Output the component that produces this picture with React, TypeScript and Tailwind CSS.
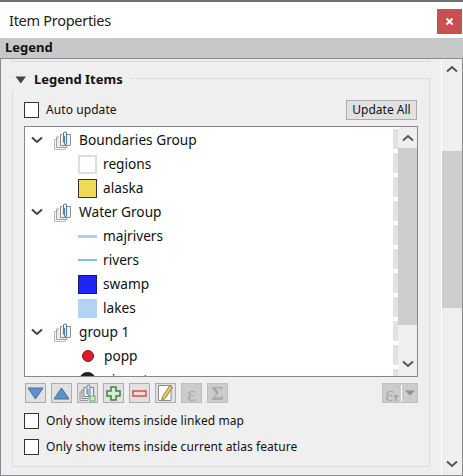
const font = "font-['Noto_Sans',sans-serif]";

function Checkbox({ label }: { label: string }) {
  return (
    <label className="flex h-4 items-center gap-[7px] text-[12px] tracking-[0.08px] text-[#111]">
      <span className="h-4 w-[15px] border border-[#333] bg-white" />
      {label}
    </label>
  );
}

function GroupIcon() {
  return (
    <svg width="18" height="19" viewBox="0 0 18 19" fill="none">
      <path d="M3 8.5H0.5V18.5H11.5V16" stroke="#b8b8b8" />
      <path d="M5 6H2.5V16.5H13V14.5" stroke="#a0a0a0" fill="#ececec" />
      <path d="M8 3.5H6.5V14.5H16.5V3.5H13" stroke="#8a8a8a" fill="#f4f4f4" />
      <path d="M9.5 11.5V2.5a1.5 1.5 0 0 1 3 0v10a1 1 0 0 1-2 0V5" stroke="#4f7ea8" strokeWidth="1.1" />
    </svg>
  );
}

function Chevron({ color = '#555' }: { color?: string }) {
  return (
    <svg width="12" height="8" viewBox="0 0 12 8" fill="none">
      <path d="M1 1.5L6 6L11 1.5" stroke={color} strokeWidth="2" />
    </svg>
  );
}

function ChevronUp() {
  return (
    <svg width="12" height="8" viewBox="0 0 12 8" fill="none">
      <path d="M1 6.5L6 2L11 6.5" stroke="#555" strokeWidth="2" />
    </svg>
  );
}

function GroupRow({ name }: { name: string }) {
  return (
    <div className="flex h-6 items-center text-[13.7px] text-[#111]">
      <span className="ml-[6px] flex w-[23px] justify-start">
        <Chevron color="#444" />
      </span>
      <span className="flex w-[25px]">
        <GroupIcon />
      </span>
      <span>{name}</span>
    </div>
  );
}

function LayerRow({ name, symbol, wide }: { name: string; symbol: React.ReactNode; wide?: boolean }) {
  return (
    <div className="flex h-6 items-center pl-[53px] text-[13.7px] text-[#111]">
      <span className="flex h-[19px] w-[19px] shrink-0 items-center justify-center">{symbol}</span>
      <span className={wide ? 'ml-[7px]' : 'ml-[6px]'}>{name}</span>
    </div>
  );
}

function Fill({ className }: { className: string }) {
  return <span className={`block h-[19px] w-[19px] border ${className}`} />;
}

function Line({ className }: { className: string }) {
  return <span className={`block w-[19px] ${className}`} />;
}

function Dot({ className }: { className: string }) {
  return <span className={`block shrink-0 rounded-full border ${className}`} />;
}

function ToolButton({ children, disabled }: { children: React.ReactNode; disabled?: boolean }) {
  return (
    <button
      className={`flex h-5 w-[21px] items-center justify-center border ${
        disabled ? 'border-[#bfbfbf] bg-[#cccccc]' : 'border-[#adadad] bg-[#e1e1e1]'
      }`}
    >
      {children}
    </button>
  );
}

function Scrollbar({ topClass, thumbClass, bottomClass }: { topClass: string; thumbClass: string; bottomClass: string }) {
  return (
    <div className="flex h-full flex-col bg-[#efefef]">
      <div className={`flex justify-center ${topClass}`}>
        <ChevronUp />
      </div>
      <div className={`bg-[#cdcdcd] ${thumbClass}`} />
      <div className={`flex flex-1 justify-center ${bottomClass}`}>
        <Chevron />
      </div>
    </div>
  );
}

export default function App() {
  return (
    <div className={`flex h-[476px] w-[463px] flex-col overflow-hidden bg-white ${font}`}>
      {/* title bar */}
      <div className="flex h-[38px] shrink-0 items-start justify-between border-t-2 border-[#707070] bg-white">
        <span className="mt-[7px] ml-[9px] text-[14.5px] leading-[22px] tracking-[-0.28px] text-[#222]">Item Properties</span>
        <button className="mt-[7px] mr-px flex h-[25px] w-[25px] items-center justify-center bg-[#c75050]">
          <svg width="9" height="9" viewBox="0 0 9 9">
            <path d="M1.5 1.5L7.5 7.5M7.5 1.5L1.5 7.5" stroke="#fff" strokeWidth="2" />
          </svg>
        </button>
      </div>

      {/* section header */}
      <div className="flex h-5 shrink-0 items-center bg-[#c8c8c8] pl-[5px] text-[13px] font-bold text-[#111]">
        Legend
      </div>

      {/* scrolling panel */}
      <div className="flex min-h-0 flex-1 border border-[#8a8a94] bg-[#efefef]">
        <div className="min-w-0 flex-1 border-r border-white px-[11px]">
          <div className="h-[3px] border-x border-b border-[#dcdcdc]" />

          {/* Legend Items group */}
          <div className="relative mt-[16px] h-[389px] border border-[#dcdcdc] px-[11px]">
            <div className="absolute -top-[9px] -left-px flex h-5 items-center gap-[7px] bg-[#efefef] pr-[7px] pl-[3px] text-[13px] font-bold text-[#111]">
              <svg width="12" height="8" viewBox="0 0 12 8">
                <path d="M0.5 0.5H11L5.75 7.5Z" fill="#444" />
              </svg>
              Legend Items
            </div>

            <div className="mt-[21px] flex h-5 items-center justify-between pr-px">
              <Checkbox label="Auto update" />
              <button className="h-5 w-[71px] border border-[#adadad] bg-[#e1e1e1] text-[12px] leading-none text-[#111]">
                Update All
              </button>
            </div>

            {/* tree */}
            <div className="mt-[6px] flex h-[251px] border border-[#828790] bg-white">
              <div className="relative min-w-0 flex-1 overflow-hidden pt-px">
                <GroupRow name="Boundaries Group" />
                <LayerRow name="regions" symbol={<Fill className="border-2 border-[#dddddd] bg-white" />} />
                <LayerRow name="alaska" symbol={<Fill className="border-[#333] bg-[#efd955]" />} />
                <GroupRow name="Water Group" />
                <LayerRow name="majrivers" symbol={<Line className="h-[3px] bg-[#a9d0f1]" />} />
                <LayerRow name="rivers" symbol={<Line className="h-[2px] bg-[#85bbe8]" />} />
                <LayerRow name="swamp" symbol={<Fill className="border-[#1a1a60] bg-[#1c26f5]" />} />
                <LayerRow name="lakes" symbol={<Fill className="border-[#b0d4f2] bg-[#b0d4f2]" />} />
                <GroupRow name="group 1" />
                <LayerRow name="popp" wide symbol={<Dot className="h-3 w-3 border-[#7d1a22] bg-[#e3192b]" />} />
                <LayerRow name="airports" wide symbol={<Dot className="h-[17px] w-[17px] border-[#111] bg-[#222]" />} />
                {/* dashed guide on the right of the tree */}
                <div className="absolute top-0 right-0 flex w-[5px] flex-col gap-1 pt-[2px]">
                  {Array.from({ length: 11 }).map((_, i) => (
                    <span key={i} className="block h-5 shrink-0 bg-[#e2e2e2]" />
                  ))}
                </div>
              </div>
              <div className="w-[19px] shrink-0">
                <Scrollbar topClass="h-[21px] items-center" thumbClass="h-[177px]" bottomClass="pt-[35px]" />
              </div>
            </div>

            {/* toolbar */}
            <div className="mt-[6px] flex h-5 items-center justify-between pl-px">
              <div className="flex gap-[5px]">
                <ToolButton>
                  <svg width="17" height="13" viewBox="0 0 17 13">
                    <path d="M1 1H16L8.5 12Z" fill="#5b92cc" stroke="#44709c" />
                  </svg>
                </ToolButton>
                <ToolButton>
                  <svg width="17" height="13" viewBox="0 0 17 13">
                    <path d="M1 12H16L8.5 1Z" fill="#5b92cc" stroke="#44709c" />
                  </svg>
                </ToolButton>
                <ToolButton>
                  <svg width="17" height="18" viewBox="0 0 17 18" fill="none">
                    <path d="M3 8H1V16.5H9" stroke="#9a9a9a" />
                    <path d="M5 6H3V14.5H10" stroke="#8a8a8a" fill="#e8e8e8" />
                    <path d="M7 3.5H5V12.5H14.5V3.5H12" stroke="#808080" fill="#f2f2f2" />
                    <path d="M8 10V2.5a1.5 1.5 0 0 1 3 0v8a1 1 0 0 1-2 0V5" stroke="#4f7ea8" />
                    <rect x="11" y="12" width="5" height="5" fill="#d2ecd0" stroke="#6aa86a" />
                  </svg>
                </ToolButton>
                <ToolButton>
                  <svg width="15" height="15" viewBox="0 0 15 15">
                    <path d="M5 1H10V5H14V10H10V14H5V10H1V5H5Z" fill="#d8ecd4" stroke="#3f7f45" strokeWidth="1.5" />
                  </svg>
                </ToolButton>
                <ToolButton>
                  <svg width="15" height="7" viewBox="0 0 15 7">
                    <rect x="1" y="1" width="13" height="5" fill="#f6dcdc" stroke="#e0484d" strokeWidth="1.5" />
                  </svg>
                </ToolButton>
                <ToolButton>
                  <svg width="17" height="18" viewBox="0 0 17 18">
                    <path d="M1.5 1.5H14V16.5H1.5Z" fill="#fff" stroke="#8c8c8c" />
                    <path d="M13 1.5L15.5 3.5L8 14.5L5 16L5.5 12.5Z" fill="#e6cd58" stroke="#8d7f3a" />
                  </svg>
                </ToolButton>
                <ToolButton disabled>
                  <span className="font-['Liberation_Serif',serif] text-[22px] leading-[17px] text-[#a8a8a8]">ε</span>
                </ToolButton>
                <ToolButton disabled>
                  <span className="font-['Liberation_Serif',serif] text-[19px] leading-none font-bold text-[#a8a8a8]">Σ</span>
                </ToolButton>
              </div>
              <div className="flex h-5 w-9 items-center border border-[#bfbfbf] bg-[#cccccc]">
                <span className="relative flex w-[18px] justify-start pl-[2px] font-['Liberation_Serif',serif] text-[22px] leading-[17px] text-[#a8a8a8]">
                  ε
                  <svg className="absolute top-[10px] left-[10px]" width="6" height="6" viewBox="0 0 6 6">
                    <path d="M0 0H6L4 3V6H2V3Z" fill="#a8a8a8" />
                  </svg>
                </span>
                <span className="h-[17px] w-px bg-white" />
                <svg className="ml-[3px]" width="10" height="6" viewBox="0 0 10 6">
                  <path d="M0 0.5H10L5 5.5Z" fill="#8f8f8f" />
                </svg>
              </div>
            </div>

            <div className="mt-[10px] flex flex-col gap-[10px]">
              <Checkbox label="Only show items inside linked map" />
              <Checkbox label="Only show items inside current atlas feature" />
            </div>
          </div>
        </div>

        {/* outer scrollbar */}
        <div className="w-5 shrink-0">
          <Scrollbar topClass="h-[92px] items-start pt-[6px]" thumbClass="h-[157px]" bottomClass="items-end pb-[7px]" />
        </div>
      </div>
    </div>
  );
}
